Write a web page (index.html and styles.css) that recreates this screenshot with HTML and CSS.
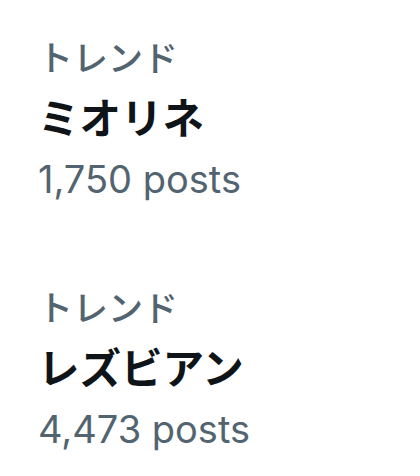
FILE: index.html
```html
<!DOCTYPE html>
<html lang="ja">
<head>
    <meta charset="UTF-8">
    <meta name="viewport" content="width=device-width, initial-scale=1.0">
    <title>トレンド</title>
    <link rel="stylesheet" href="styles.css">
</head>
<body>
    <div class="trends">
        <div class="trend">
            <div class="trend-label">トレンド</div>
            <div class="trend-name">ミオリネ</div>
            <div class="trend-count">1,750 posts</div>
        </div>
        <div class="trend">
            <div class="trend-label">トレンド</div>
            <div class="trend-name">レズビアン</div>
            <div class="trend-count">4,473 posts</div>
        </div>
    </div>
</body>
</html>
```

FILE: styles.css
```css
* {
    padding: 0;
    margin: 0;
}

body {
    background: #ffffff;
    font-family: "Inter", "Noto Sans CJK JP", sans-serif;
}

.trends {
    display: flex;
    flex-direction: column;
    gap: 72px;
    padding: 29px 38px;
}

.trend {
    display: flex;
    flex-direction: column;
}

.trend-label {
    font-size: 35px;
    line-height: 58px;
    color: #536471;
    font-weight: 500;
}

.trend-name {
    font-size: 41.5px;
    line-height: 64px;
    color: #0f1419;
    font-weight: 700;
}

.trend-count {
    font-size: 38px;
    line-height: 56px;
    color: #536471;
}
```
